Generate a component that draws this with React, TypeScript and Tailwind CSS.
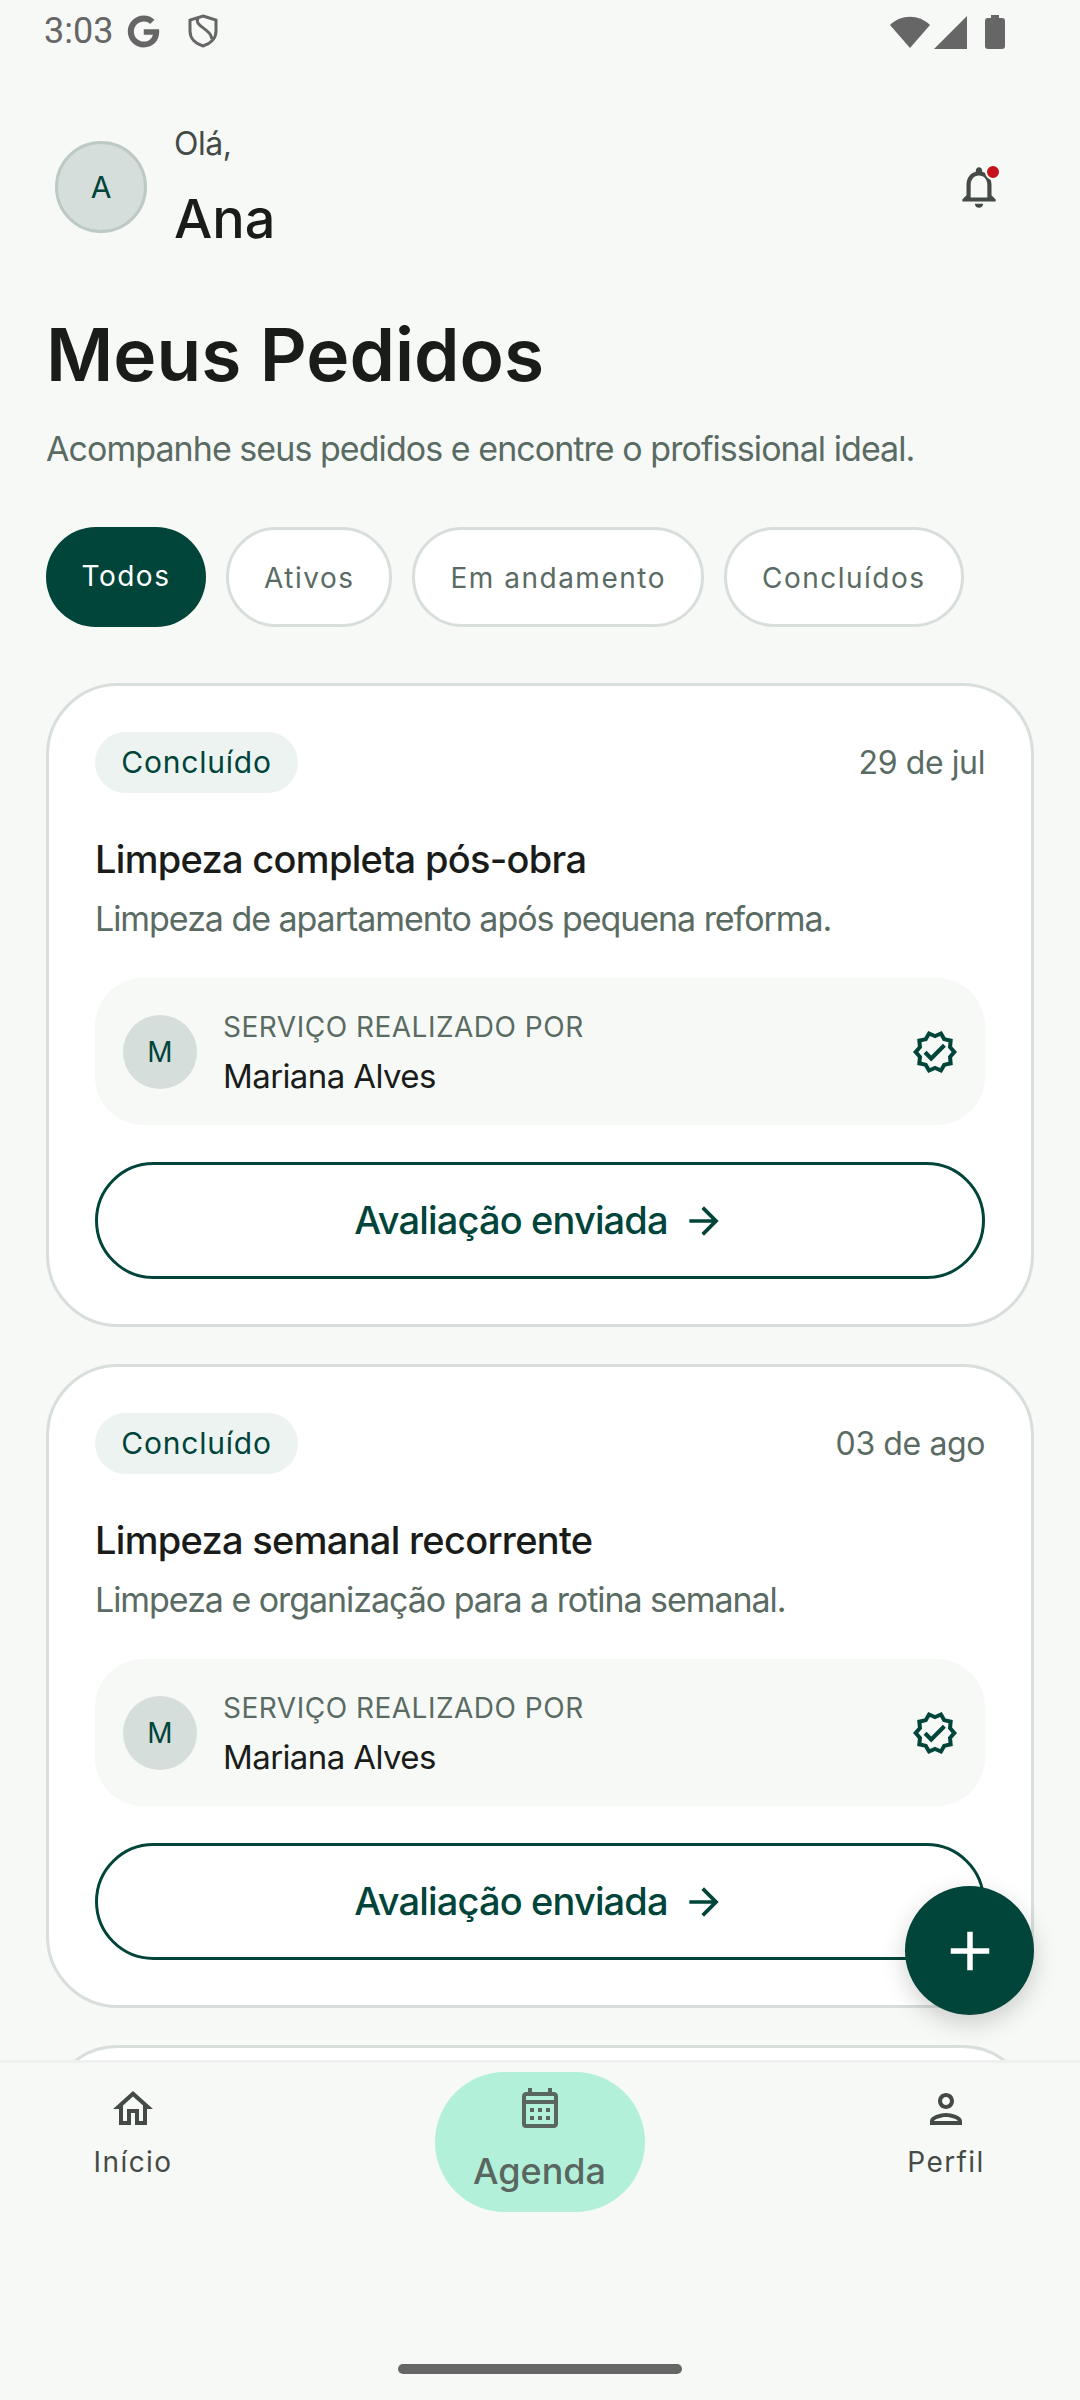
import React from "react";
import {
  MdAdd,
  MdArrowForward,
  MdOutlineCalendarMonth,
  MdOutlineHome,
  MdOutlineNotifications,
  MdOutlinePerson,
  MdOutlineVerified,
} from "react-icons/md";
import { FaGoogle } from "react-icons/fa";

const filters = ["Ativos", "Em andamento", "Concluídos"];

const orders = [
  {
    date: "29 de jul",
    title: "Limpeza completa pós-obra",
    description: "Limpeza de apartamento após pequena reforma.",
  },
  {
    date: "03 de ago",
    title: "Limpeza semanal recorrente",
    description: "Limpeza e organização para a rotina semanal.",
  },
];

function StatusBar() {
  return (
    <div className="flex h-[60px] shrink-0 items-center justify-between pl-[44px] pr-[75px] pt-[2px] font-['Roboto',sans-serif] text-[#666666]">
      <div className="flex items-center">
        <span className="text-[36px] leading-none">3:03</span>
        <FaGoogle className="ml-[14px] h-[33px] w-[33px]" />
        {/* shield */}
        <svg viewBox="0 0 30 34" className="ml-[28px] h-[34px] w-[30px]" fill="none" stroke="#666666" strokeWidth="3">
          <path d="M15 2 L28 6 V17 C28 25 22 30 15 32 C8 30 2 25 2 17 V6 Z" />
          <path d="M10 4 C6 12 20 14 23 22 L24 25" />
        </svg>
      </div>
      <div className="flex items-center pt-[2px]">
        <svg viewBox="0 0 40 34" className="h-[34px] w-[40px]" fill="#666666">
          <path d="M0 10 C11 -1 29 -1 40 10 L20 33 Z" />
        </svg>
        <svg viewBox="0 0 33 33" className="ml-[4px] h-[33px] w-[33px]" fill="#666666">
          <path d="M33 0 V33 H0 Z" />
        </svg>
        <svg viewBox="0 0 20 34" className="ml-[18px] h-[34px] w-[20px]" fill="#666666">
          <path d="M6 0 H14 V3 H17 Q20 3 20 6 V31 Q20 34 17 34 H3 Q0 34 0 31 V6 Q0 3 3 3 H6 Z" />
        </svg>
      </div>
    </div>
  );
}

function OrderCard({ date, title, description }: { date: string; title: string; description: string }) {
  return (
    <div className="shrink-0 rounded-[72px] border-[3px] border-[#d8dedb] bg-white px-[46px] pb-[45px] pt-[46px]">
      <div className="flex items-center justify-between">
        <span className="flex h-[61px] w-[203px] items-center justify-center rounded-full bg-[#edf3f1] text-[30px] tracking-[0.8px] text-[#00443a]">
          Concluído
        </span>
        <span className="text-[32px] tracking-[-0.4px] text-[#5a6b63]">{date}</span>
      </div>
      <div className="mt-[42px] text-[38px] font-medium leading-[48px] tracking-[-0.7px] text-[#1a1c1a]">{title}</div>
      <div className="mt-[12px] text-[34px] leading-[48px] tracking-[-1.05px] text-[#5a6b63]">{description}</div>

      {/* provider */}
      <div className="mt-[35px] flex h-[147px] items-center rounded-[48px] bg-[#f7f9f7] pl-[28px] pr-[26px]">
        <span className="flex h-[74px] w-[74px] items-center justify-center rounded-full bg-[#d6dedb] text-[28px] text-[#00443a]">
          M
        </span>
        <div className="ml-[26px] flex-1 pt-[2px]">
          <div className="text-[28px] leading-[40px] tracking-[0.5px] text-[#5a6b63]">SERVIÇO REALIZADO POR</div>
          <div className="mt-[7px] text-[33px] leading-[44px] tracking-[-0.6px] text-[#1a1c1a]">Mariana Alves</div>
        </div>
        <MdOutlineVerified className="h-[48px] w-[48px] text-[#00443a]" />
      </div>

      <div className="mt-[37px] flex h-[117px] items-center justify-center rounded-full border-[3px] border-[#00443a] text-[38px] font-medium tracking-[-0.85px] text-[#00443a]">
        Avaliação enviada
        <MdArrowForward className="ml-[14px] h-[44px] w-[44px]" />
      </div>
    </div>
  );
}

function NavItem({ icon, label }: { icon: React.ReactNode; label: string }) {
  return (
    <div className="flex w-[160px] flex-col items-center text-[#444b47]">
      {icon}
      <span className="mt-[9px] text-[28px] leading-[40px] tracking-[1.4px]">{label}</span>
    </div>
  );
}

export default function App() {
  return (
    <div className="relative flex h-[2400px] w-[1080px] flex-col overflow-hidden bg-[#f7f9f7] font-['Inter',sans-serif]">
      <StatusBar />

      <main className="flex min-h-0 flex-1 flex-col overflow-hidden">
        {/* greeting */}
        <div className="mt-[62px] flex shrink-0 items-center justify-between pl-[55px] pr-[76px]">
          <div className="flex items-center">
            <span className="flex h-[92px] w-[92px] items-center justify-center rounded-full border-[3px] border-[#bcc9c4] bg-[#d6dedb] text-[30px] text-[#00443a]">
              A
            </span>
            <div className="ml-[27px]">
              <div className="text-[32px] leading-[44px] tracking-[-0.5px] text-[#444b47]">Olá,</div>
              <div className="mt-[20px] text-[54px] font-medium leading-[66px] text-[#1a1c1a]">Ana</div>
            </div>
          </div>
          <div className="relative">
            <MdOutlineNotifications className="h-[50px] w-[50px] text-[#444b47]" />
            <span className="absolute right-[3px] top-[2px] h-[16px] w-[16px] rounded-full border-[2px] border-[#f7f9f7] bg-[#c4121a]" />
          </div>
        </div>

        <h1 className="mt-[58px] shrink-0 pl-[46px] text-[73px] font-semibold leading-[90px] text-[#1a1c1a]">Meus Pedidos</h1>
        <p className="mt-[26px] shrink-0 pl-[46px] text-[34px] leading-[46px] tracking-[-0.95px] text-[#5a6b63]">
          Acompanhe seus pedidos e encontre o profissional ideal.
        </p>

        {/* filters */}
        <div className="mt-[55px] flex shrink-0 gap-[20px] pl-[46px]">
          <span className="flex h-[100px] w-[160px] items-center justify-center rounded-full bg-[#00443a] pb-[2px] text-[28px] tracking-[1.5px] text-white">
            Todos
          </span>
          {filters.map((filter) => (
            <span
              key={filter}
              className="flex h-[100px] items-center justify-center rounded-full border-[3px] border-[#d8dedb] bg-white px-[35px] pt-[2px] text-[28px] tracking-[1.5px] text-[#5a6b63]"
            >
              {filter}
            </span>
          ))}
        </div>

        {/* orders */}
        <div className="mt-[56px] flex flex-col gap-[37px] px-[46px]">
          {orders.map((order) => (
            <OrderCard key={order.title} {...order} />
          ))}
          <div className="h-[300px] shrink-0 rounded-[72px] border-[3px] border-[#d8dedb] bg-white" />
        </div>
      </main>

      {/* bottom nav */}
      <nav className="relative h-[340px] shrink-0 border-t-[3px] border-[#eff1ef] bg-[#f7f9f7]">
        <div className="flex items-start justify-between pl-[53px] pr-[54px] pt-[9px]">
          <div className="pt-[13px]">
            <NavItem icon={<MdOutlineHome className="h-[48px] w-[48px]" />} label="Início" />
          </div>
          <div className="flex h-[140px] w-[210px] flex-col items-center rounded-full bg-[#b2f0da] pt-[12px] text-[#5a6660]">
            <MdOutlineCalendarMonth className="h-[48px] w-[48px]" />
            <span className="mt-[15px] text-[36px] font-medium leading-[48px]">Agenda</span>
          </div>
          <div className="pt-[13px]">
            <NavItem icon={<MdOutlinePerson className="h-[48px] w-[48px]" />} label="Perfil" />
          </div>
        </div>
        <div className="absolute bottom-[26px] left-[398px] h-[10px] w-[284px] rounded-full bg-[#666666]" />
      </nav>

      {/* fab */}
      <button className="absolute left-[905px] top-[1886px] flex h-[129px] w-[129px] items-center justify-center rounded-full bg-[#00443a] text-white shadow-[0_8px_24px_rgba(0,0,0,0.18)]">
        <MdAdd className="h-[66px] w-[66px]" />
      </button>
    </div>
  );
}
